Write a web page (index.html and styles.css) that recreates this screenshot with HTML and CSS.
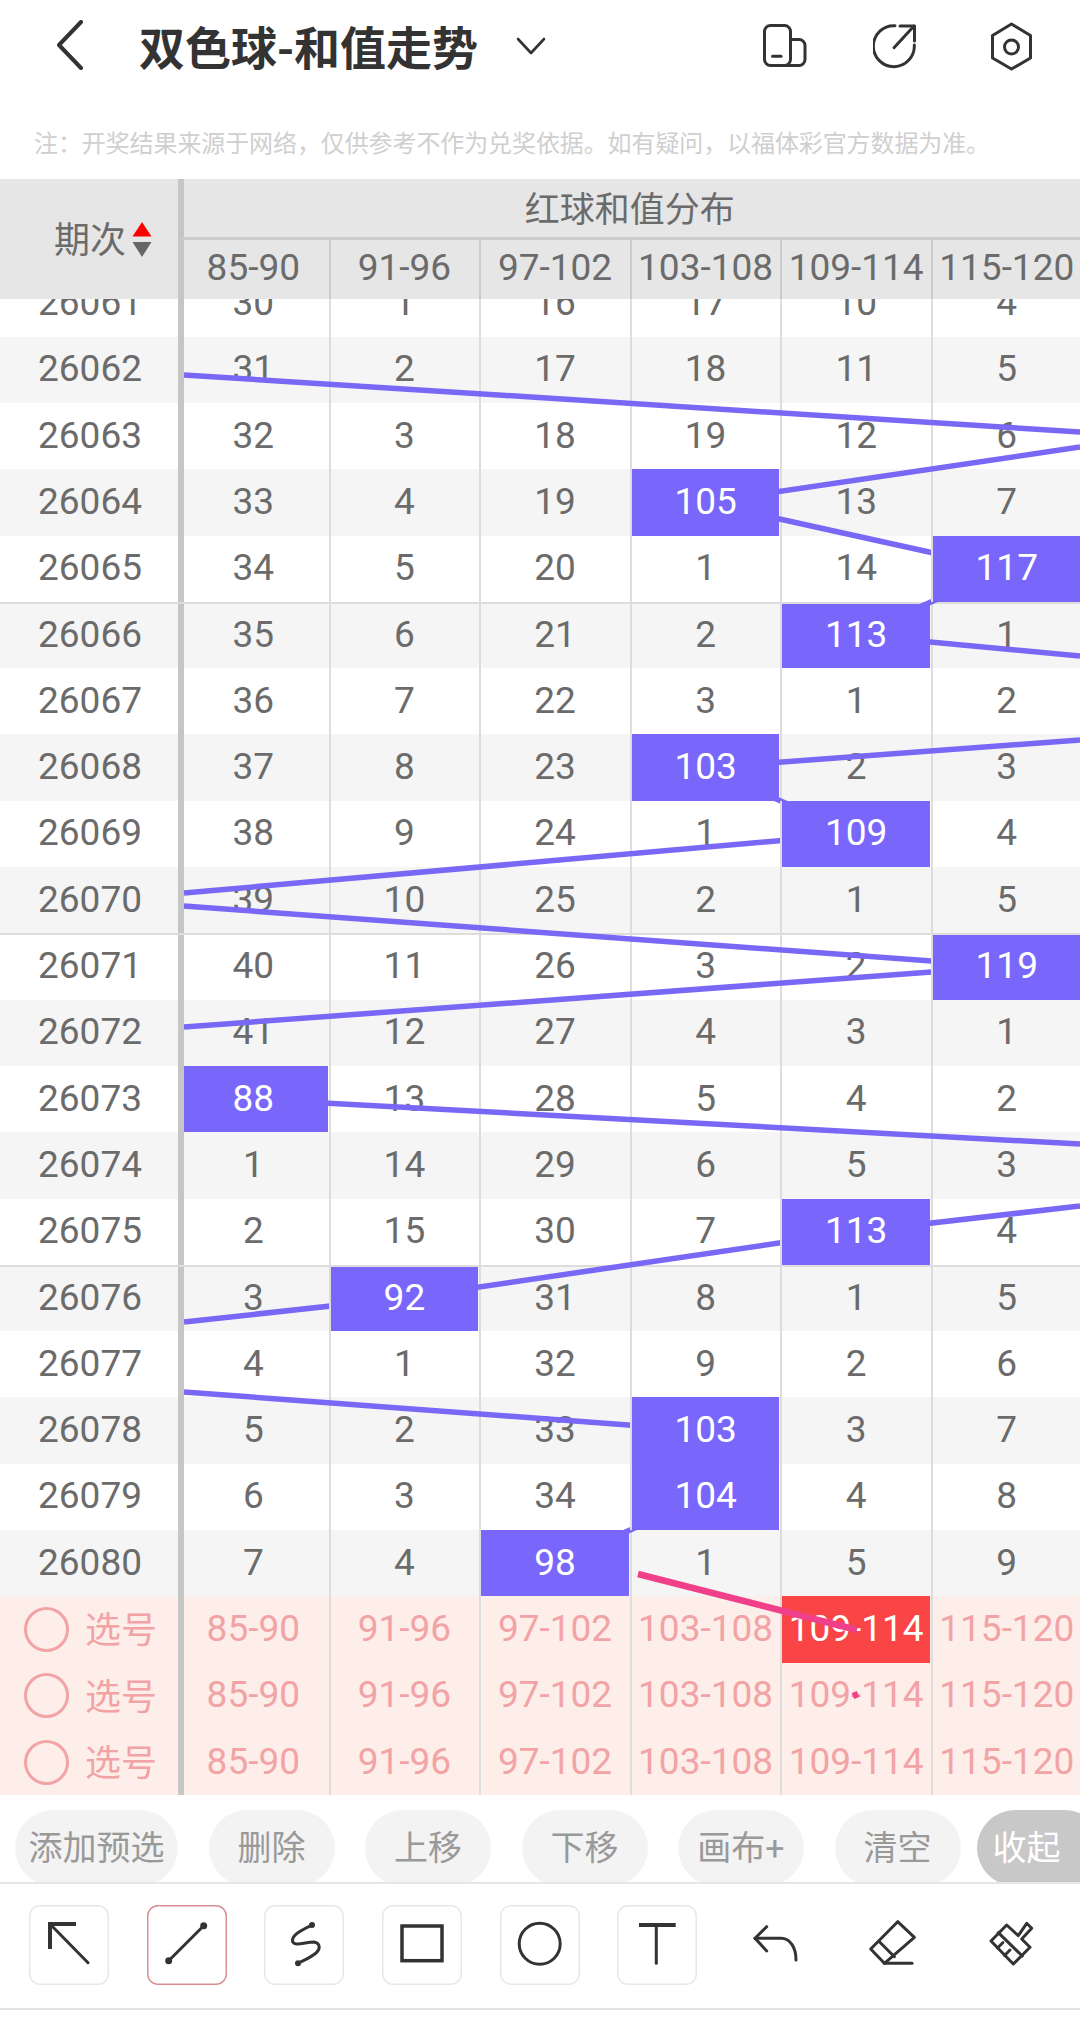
FILE: index.html
```html
<!DOCTYPE html>
<html lang="zh-CN">
<head>
<meta charset="utf-8">
<title>双色球-和值走势</title>
<link rel="stylesheet" href="styles.css">
</head>
<body>
<div class="page">
  <header class="topbar">
    <svg class="back" width="30" height="50" viewBox="0 0 30 50"><path d="M26 2 L4 25 L26 48"/></svg>
    <h1 class="title">双色球-和值走势</h1>
    <svg class="caret" width="30" height="18" viewBox="0 0 30 18"><path d="M2 2 L15 16 L28 2"/></svg>
    <div class="top-icons">
      <svg class="top-icon" width="50" height="50" viewBox="0 0 50 50"><rect x="4.500" y="3.500" width="26" height="40" rx="6"/><path d="M30.500 17.500 H39 a6 6 0 0 1 6 6 V37.500 a6 6 0 0 1 -6 6 H24"/><path d="M12.500 34.300 H21"/></svg>
      <svg class="top-icon" width="50" height="50" viewBox="0 0 50 50"><path d="M22 3.700 A20.500 20.500 0 1 0 41.300 23"/><path d="M21 25.700 L41 4"/><path d="M27 4 H41.500 V19"/></svg>
      <svg class="top-icon" width="50" height="50" viewBox="0 0 50 50"><path d="M25.500 2 L44.500 13.500 V36 L25.500 47 L6.500 36 V13.500 Z"/><circle cx="25.500" cy="25" r="7"/></svg>
    </div>
  </header>
  <p class="note">注：开奖结果来源于网络，仅供参考不作为兑奖依据。如有疑问，以福体彩官方数据为准。</p>

  <div class="thead">
    <div class="th-issue"><span>期次</span>
      <svg class="sort" width="20" height="36" viewBox="0 0 20 36"><path class="sort-up" d="M10 0 L19.500 14.500 H0.500 Z"/><path class="sort-down" d="M0.500 20 H19.500 L10 35 Z"/></svg>
    </div>
    <div class="th-group">红球和值分布</div>
    <div class="cell first">85-90</div>
    <div class="cell">91-96</div>
    <div class="cell">97-102</div>
    <div class="cell">103-108</div>
    <div class="cell">109-114</div>
    <div class="cell">115-120</div>
  </div>

  <div class="tbody">
    <div class="rows">
      <div class="row sep"><div class="issue">26061</div><div class="cell first">30</div><div class="cell">1</div><div class="cell">16</div><div class="cell">17</div><div class="cell">10</div><div class="cell">4</div></div>
      <div class="row alt"><div class="issue">26062</div><div class="cell first">31</div><div class="cell">2</div><div class="cell">17</div><div class="cell">18</div><div class="cell">11</div><div class="cell">5</div></div>
      <div class="row"><div class="issue">26063</div><div class="cell first">32</div><div class="cell">3</div><div class="cell">18</div><div class="cell">19</div><div class="cell">12</div><div class="cell">6</div></div>
      <div class="row alt"><div class="issue">26064</div><div class="cell first">33</div><div class="cell">4</div><div class="cell">19</div><div class="cell hit">105</div><div class="cell">13</div><div class="cell">7</div></div>
      <div class="row"><div class="issue">26065</div><div class="cell first">34</div><div class="cell">5</div><div class="cell">20</div><div class="cell">1</div><div class="cell">14</div><div class="cell hit">117</div></div>
      <div class="row alt sep"><div class="issue">26066</div><div class="cell first">35</div><div class="cell">6</div><div class="cell">21</div><div class="cell">2</div><div class="cell hit">113</div><div class="cell">1</div></div>
      <div class="row"><div class="issue">26067</div><div class="cell first">36</div><div class="cell">7</div><div class="cell">22</div><div class="cell">3</div><div class="cell">1</div><div class="cell">2</div></div>
      <div class="row alt"><div class="issue">26068</div><div class="cell first">37</div><div class="cell">8</div><div class="cell">23</div><div class="cell hit">103</div><div class="cell">2</div><div class="cell">3</div></div>
      <div class="row"><div class="issue">26069</div><div class="cell first">38</div><div class="cell">9</div><div class="cell">24</div><div class="cell">1</div><div class="cell hit">109</div><div class="cell">4</div></div>
      <div class="row alt"><div class="issue">26070</div><div class="cell first">39</div><div class="cell">10</div><div class="cell">25</div><div class="cell">2</div><div class="cell">1</div><div class="cell">5</div></div>
      <div class="row sep"><div class="issue">26071</div><div class="cell first">40</div><div class="cell">11</div><div class="cell">26</div><div class="cell">3</div><div class="cell">2</div><div class="cell hit">119</div></div>
      <div class="row alt"><div class="issue">26072</div><div class="cell first">41</div><div class="cell">12</div><div class="cell">27</div><div class="cell">4</div><div class="cell">3</div><div class="cell">1</div></div>
      <div class="row"><div class="issue">26073</div><div class="cell first hit">88</div><div class="cell">13</div><div class="cell">28</div><div class="cell">5</div><div class="cell">4</div><div class="cell">2</div></div>
      <div class="row alt"><div class="issue">26074</div><div class="cell first">1</div><div class="cell">14</div><div class="cell">29</div><div class="cell">6</div><div class="cell">5</div><div class="cell">3</div></div>
      <div class="row"><div class="issue">26075</div><div class="cell first">2</div><div class="cell">15</div><div class="cell">30</div><div class="cell">7</div><div class="cell hit">113</div><div class="cell">4</div></div>
      <div class="row alt sep"><div class="issue">26076</div><div class="cell first">3</div><div class="cell hit">92</div><div class="cell">31</div><div class="cell">8</div><div class="cell">1</div><div class="cell">5</div></div>
      <div class="row"><div class="issue">26077</div><div class="cell first">4</div><div class="cell">1</div><div class="cell">32</div><div class="cell">9</div><div class="cell">2</div><div class="cell">6</div></div>
      <div class="row alt"><div class="issue">26078</div><div class="cell first">5</div><div class="cell">2</div><div class="cell">33</div><div class="cell hit">103</div><div class="cell">3</div><div class="cell">7</div></div>
      <div class="row"><div class="issue">26079</div><div class="cell first">6</div><div class="cell">3</div><div class="cell">34</div><div class="cell hit">104</div><div class="cell">4</div><div class="cell">8</div></div>
      <div class="row alt"><div class="issue">26080</div><div class="cell first">7</div><div class="cell">4</div><div class="cell hit">98</div><div class="cell">1</div><div class="cell">5</div><div class="cell">9</div></div>
      <div class="row pick"><div class="issue"><span class="ring"></span><span class="pick-label">选号</span></div><div class="cell first">85-90</div><div class="cell">91-96</div><div class="cell">97-102</div><div class="cell">103-108</div><div class="cell hit red">109-114</div><div class="cell">115-120</div></div>
      <div class="row pick"><div class="issue"><span class="ring"></span><span class="pick-label">选号</span></div><div class="cell first">85-90</div><div class="cell">91-96</div><div class="cell">97-102</div><div class="cell">103-108</div><div class="cell">109-114</div><div class="cell">115-120</div></div>
      <div class="row pick"><div class="issue"><span class="ring"></span><span class="pick-label">选号</span></div><div class="cell first">85-90</div><div class="cell">91-96</div><div class="cell">97-102</div><div class="cell">103-108</div><div class="cell">109-114</div><div class="cell">115-120</div></div>
    </div>
    <svg class="trend" width="1080" height="1496" viewBox="0 299 1080 1496">
      <path d="M184 375 L1080 432"/>
      <path d="M705 502.500 L1080 447"/>
      <path d="M705 502.500 L1006 569"/>
      <path d="M1006 569 L855.700 635"/>
      <path d="M855.700 635 L1080 656"/>
      <path d="M705 767.700 L1080 740"/>
      <path d="M705 767.700 L855.700 834"/>
      <path d="M855.700 834 L184 893"/>
      <path d="M184 906 L1006 966.600"/>
      <path d="M1006 966.600 L184 1027"/>
      <path d="M254 1099.200 L1080 1144"/>
      <path d="M855.700 1231.800 L1080 1206"/>
      <path d="M855.700 1231.800 L404 1298"/>
      <path d="M404 1298 L184 1322"/>
      <path d="M184 1392 L705 1430.700"/>
      <path d="M705 1497 L554.500 1563.300"/>
    </svg>
    <svg class="sketch" width="1080" height="1496" viewBox="0 299 1080 1496">
      <path d="M638 1574 L857 1630"/>
      <path d="M853 1696 L858 1694"/>
    </svg>
  </div>

  <div class="actions">
    <div class="pill wide">添加预选</div>
    <div class="pill">删除</div>
    <div class="pill">上移</div>
    <div class="pill">下移</div>
    <div class="pill">画布+</div>
    <div class="pill">清空</div>
    <div class="pill fold">收起</div>
  </div>

  <div class="tools">
    <div class="tool"><svg width="80" height="80" viewBox="0 0 80 80"><path class="heavy" d="M21 44 V19 H47"/><path d="M21 19 L59 57.700"/></svg></div>
    <div class="tool active"><svg width="80" height="80" viewBox="0 0 80 80"><path d="M21.700 55.700 L56.700 20.700"/><circle class="dot" cx="21.700" cy="55.700" r="3.500"/><circle class="dot" cx="56.700" cy="20.700" r="3.500"/></svg></div>
    <div class="tool"><svg width="80" height="80" viewBox="0 0 80 80"><path d="M48 20 C40 24 28 29 28.500 36 C29 42 42 37 50 37 C56 38 57 44 52 48 C46 53 40 55 34 58.300"/><circle class="dot" cx="48" cy="20" r="3"/><circle class="dot" cx="34" cy="58.300" r="3"/></svg></div>
    <div class="tool"><svg width="80" height="80" viewBox="0 0 80 80"><rect class="rect-shape" x="20" y="21" width="40" height="34.700"/></svg></div>
    <div class="tool"><svg width="80" height="80" viewBox="0 0 80 80"><circle cx="39.700" cy="38.700" r="20.500"/></svg></div>
    <div class="tool"><svg width="80" height="80" viewBox="0 0 80 80"><path class="heavy" d="M22 20 H58.700"/><path d="M39.300 20 V58.300"/></svg></div>
    <div class="tool plain"><svg width="80" height="80" viewBox="0 0 80 80"><path d="M31.700 21.700 L20 33.300 L31.700 46"/><path d="M20 33.300 H46 C55 33.300 61 42 61 55"/></svg></div>
    <div class="tool plain"><svg width="80" height="80" viewBox="0 0 80 80"><path d="M45.700 16.700 L62.400 32.300 L32.400 58.300 L18.700 44 Z"/><path d="M27.400 36.700 L42.400 51.700"/><path d="M32.400 58.300 H60"/></svg></div>
    <div class="tool plain"><svg width="80" height="80" viewBox="0 0 80 80"><path d="M36.700 20 L21 36 L43.300 59 L60 42.300 L51.700 34 L61.700 23.300 L56.700 18.300 L48.300 30.700 Z"/><path d="M28.300 27.700 L52.300 51"/><path d="M27.500 43 L33 37.500 M34.500 50.500 L40 45"/></svg></div>
  </div>
</div>
</body>
</html>
```

FILE: styles.css
```css
* { box-sizing: border-box; }

html, body { margin: 0; padding: 0; background: #fff; }

.page {
  width: 1080px;
  height: 2020px;
  overflow: hidden;
  font-family: Roboto, "Noto Sans CJK SC", sans-serif;
  font-size: 37px;
  color: #6b6b6b;
  background: #fff;
}

/* top bar */
.topbar {
  display: flex;
  align-items: center;
  height: 90px;
  padding-left: 55px;
}
.back path, .caret path, .top-icon path, .top-icon rect, .top-icon circle {
  fill: none;
  stroke: #333;
  stroke-linecap: round;
  stroke-linejoin: round;
}
.back path { stroke-width: 4px; }
.caret path { stroke-width: 2.600px; }
.top-icon path, .top-icon rect, .top-icon circle { stroke-width: 3px; }
.title {
  margin: 0 0 0 54px;
  font-family: "Noto Sans CJK SC", sans-serif;
  font-size: 46px;
  font-weight: 700;
  color: #333;
  line-height: 60px;
  white-space: nowrap;
}
.caret { margin: 2px 0 0 38px; }
.top-icons {
  display: flex;
  gap: 63px;
  margin-left: auto;
  margin-right: 44.500px;
  padding-top: 4px;
}

.note {
  margin: 0;
  height: 89px;
  padding: 36px 0 0 34px;
  font-size: 24px;
  line-height: 36px;
  letter-spacing: -0.1px;
  color: #cfcfcf;
  white-space: nowrap;
}

/* table */
.thead {
  display: grid;
  grid-template-columns: 178px repeat(6, 150.6px);
  grid-template-rows: 61px 59px;
  background: #e6e6e6;
}
.th-issue {
  grid-row: 1 / 3;
  display: flex;
  align-items: center;
  gap: 6px;
  padding: 0 0 4px 54px;
  font-size: 36px;
}
.sort { margin-top: 5px; }
.sort-up { fill: #f00; }
.sort-down { fill: #666; }
.th-group {
  grid-column: 2 / 8;
  display: flex;
  align-items: center;
  justify-content: center;
  padding: 0 6px 4px 0;
  border-left: 6px solid #c6c6c6;
  border-bottom: 3px solid #cbcbcb;
  font-size: 35px;
}
.thead .cell {
  padding-bottom: 5px;
  border-left-color: #cbcbcb;
}
.thead .cell.first { border-left-color: #c6c6c6; }

.tbody {
  position: relative;
  height: 1496px;
  overflow: hidden;
}
.rows { margin-top: -28.600px; }
.row {
  display: grid;
  grid-template-columns: 178px repeat(6, 150.6px);
  height: 66.300px;
}
.row.alt { background: #f5f5f5; }
.row.sep { border-top: 2px solid #ddd; }
.issue {
  display: flex;
  align-items: center;
  justify-content: center;
}
.cell {
  display: flex;
  align-items: center;
  justify-content: center;
  border-left: 2px solid #ddd;
  border-right: 1px solid transparent;
  background-clip: padding-box;
  white-space: nowrap;
}
.row .cell { padding-bottom: 2px; }
.row .issue { padding: 0 0 2px 2px; }
.row.sep .cell { padding-bottom: 4px; }
.row.sep .issue { padding: 0 0 4px 2px; }
.row .cell.first {
  padding-right: 5px;
  border-left: 6px solid #c6c6c6;
}
.thead .cell.first {
  padding-right: 5px;
  border-left: 6px solid #c6c6c6;
}
.cell.hit {
  position: relative;
  z-index: 2;
  background-color: #7967fb;
  color: #fff;
}
.cell.hit.red { background-color: #f94545; }

.row.pick {
  background: #fdeee9;
  color: #f2a3a6;
}
.row.pick .issue {
  justify-content: flex-start;
  gap: 16px;
  padding: 0 0 0 24px;
}
.pick-label {
  margin-bottom: 4px;
  font-size: 36px;
}
.ring {
  width: 45px;
  height: 45px;
  border: 3px solid #f2a3a6;
  border-radius: 50%;
}

.trend, .sketch {
  position: absolute;
  left: 0;
  top: 0;
}
.trend { z-index: 1; }
.sketch { z-index: 3; }
.trend path {
  fill: none;
  stroke: #7967f5;
  stroke-width: 5.500px;
}
.sketch path {
  fill: none;
  stroke: #f0408a;
  stroke-width: 6.500px;
}

/* action pills */
.actions {
  display: flex;
  gap: 30.500px;
  height: 89px;
  padding: 15px 0 0 15px;
  overflow: hidden;
  border-bottom: 2px solid #e6e6e6;
}
.pill {
  flex: none;
  display: flex;
  align-items: center;
  justify-content: center;
  width: 126px;
  height: 76px;
  padding-bottom: 6px;
  border-radius: 38px;
  background: #f3f3f3;
  color: #999;
  font-size: 34px;
}
.pill.wide { width: 163px; }
.pill.fold {
  margin-left: -14.500px;
  padding-right: 26px;
  background: #c8c8c8;
  color: #fff;
}

/* drawing tools */
.tools {
  display: flex;
  gap: 37.600px;
  height: 126px;
  padding: 21px 0 0 29.300px;
  border-bottom: 2px solid #e2e2e2;
}
.tool {
  flex: none;
  width: 80px;
  height: 80px;
  border-radius: 11px;
  box-shadow: inset 0 0 0 1.500px #e8e8e8;
}
.tool.active { box-shadow: inset 0 0 0 1.500px #d98f8f; }
.tool.plain { box-shadow: none; }
.tool svg { display: block; }
.tool path, .tool rect, .tool circle {
  fill: none;
  stroke: #333;
  stroke-width: 3px;
  stroke-linecap: round;
  stroke-linejoin: round;
}
.tool .heavy { stroke-width: 4px; stroke-linecap: butt; stroke-linejoin: miter; }
.tool .rect-shape { stroke-width: 3.500px; stroke-linejoin: miter; }
.tool .dot { fill: #333; stroke: none; }
```
